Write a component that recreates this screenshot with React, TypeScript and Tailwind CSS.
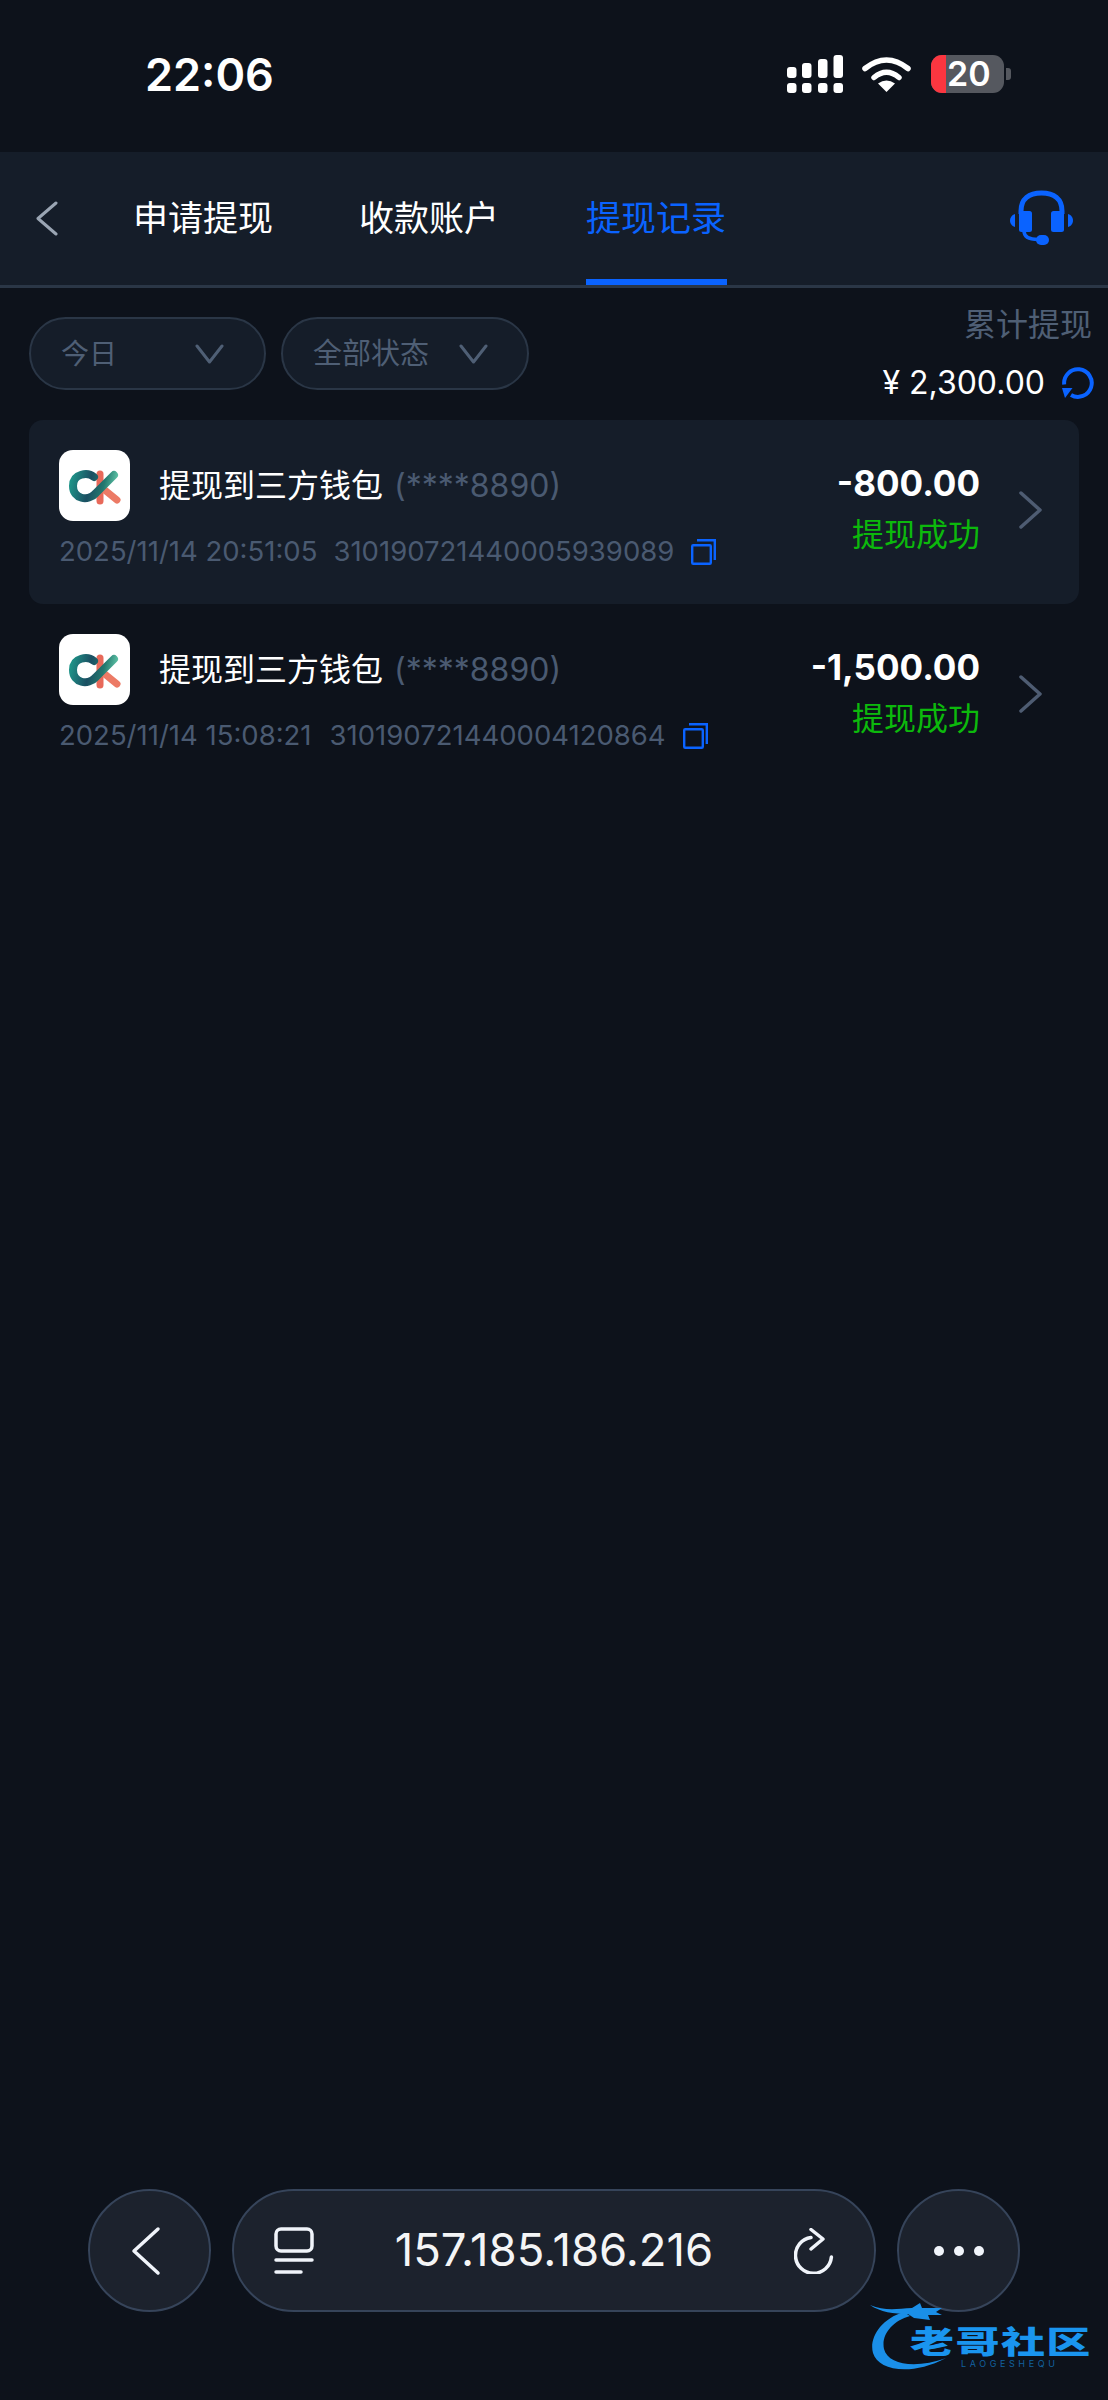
const FONT = "font-['Inter','Noto_Sans_CJK_SC',sans-serif]";

const RECORDS = [
  { time: '2025/11/14 20:51:05', id: '310190721440005939089', amount: '-800.00', active: true, idGap: 'ml-[16px]' },
  { time: '2025/11/14 15:08:21', id: '310190721440004120864', amount: '-1,500.00', active: false, idGap: 'ml-[18px]' },
];

function SignalIcon() {
  return (
    <svg width="56" height="38" viewBox="0 0 56 38" fill="#fff">
      <rect x="0" y="12" width="9.5" height="11" rx="3" />
      <rect x="15" y="8" width="9.5" height="15" rx="3" />
      <rect x="31" y="4" width="9.5" height="19" rx="3" />
      <rect x="46.5" y="0" width="9.5" height="23" rx="3" />
      <rect x="0" y="28" width="9.5" height="10" rx="3" />
      <rect x="15" y="28" width="9.5" height="10" rx="3" />
      <rect x="31" y="28" width="9.5" height="10" rx="3" />
      <rect x="46.5" y="28" width="9.5" height="10" rx="3" />
    </svg>
  );
}

function WifiIcon() {
  return (
    <svg width="49" height="36" viewBox="0 0 49 36" fill="none" stroke="#fff" strokeWidth="5.5" strokeLinecap="round">
      <path d="M3 12.5 Q24.5 -4.5 46 12.5" />
      <path d="M12 21.5 Q24.5 11 37 21.5" />
      <path d="M24.5 36 L16 27.5 Q24.5 21.5 33 27.5 Z" fill="#fff" stroke="none" />
    </svg>
  );
}

function Battery() {
  return (
    <div className="flex items-center gap-[2px]">
      <div className="flex h-[38px] w-[73px] rounded-[11px] bg-[#55585f]">
        <div className="h-full w-[15px] rounded-l-[11px] bg-[#fb3640]" />
        <span className="ml-[1px] text-[34px] leading-[38px] font-semibold text-white">20</span>
      </div>
      <div className="h-[12px] w-[5px] rounded-r-[3px] bg-[#55585f]" />
    </div>
  );
}

function HeadsetIcon() {
  return (
    <svg width="63" height="55" viewBox="0 0 63 55" fill="#0a63ff">
      <path d="M11 24 V21 C11 9 19 3 31.5 3 C44 3 52 9 52 21 V24" fill="none" stroke="#0a63ff" strokeWidth="5" />
      <rect x="9" y="21" width="13" height="21" rx="2.5" />
      <rect x="41" y="21" width="13" height="21" rx="2.5" />
      <path d="M5 24 V37 C1.5 36 0 33 0 30.5 C0 28 1.5 25 5 24 Z" />
      <path d="M58 24 V37 C61.5 36 63 33 63 30.5 C63 28 61.5 25 58 24 Z" />
      <path d="M14 41 C14 47 19 49.5 28 49.5" fill="none" stroke="#0a63ff" strokeWidth="3.5" />
      <rect x="26" y="45" width="13" height="10" rx="5" />
    </svg>
  );
}

function CkLogo() {
  return (
    <div className="h-[71px] w-[71px] shrink-0 rounded-[14px] bg-white">
      <svg width="71" height="71" viewBox="0 0 71 71" fill="none" strokeLinecap="round">
        <defs>
          <linearGradient id="ck-teal" x1="12" y1="20" x2="58" y2="30" gradientUnits="userSpaceOnUse">
            <stop offset="0" stopColor="#1f9a8c" />
            <stop offset="0.45" stopColor="#1b4f62" />
            <stop offset="0.75" stopColor="#23796f" />
            <stop offset="1" stopColor="#5cc0a4" />
          </linearGradient>
        </defs>
        <path d="M41 24 V51" stroke="#e8695a" strokeWidth="7" />
        <path d="M42 37 L58 50" stroke="#ec7a65" strokeWidth="7" />
        <path d="M35 27 C29 22 14 23 14 36 C14 49 29 52 37 43 L55 25" stroke="url(#ck-teal)" strokeWidth="8" />
      </svg>
    </div>
  );
}

function CopyIcon() {
  return (
    <svg width="25" height="26" viewBox="0 0 25 26" fill="none" stroke="#0a63ff" strokeWidth="2.4">
      <rect x="1.2" y="6.2" width="18.6" height="18.6" rx="1" />
      <path d="M6 1.2 H23.8 V21" />
    </svg>
  );
}

function DownChevron() {
  return (
    <svg width="29" height="20" viewBox="0 0 29 20" fill="none" stroke="#4f5f75" strokeWidth="3" strokeLinecap="round" strokeLinejoin="round">
      <path d="M2 2 L14.5 18 L27 2" />
    </svg>
  );
}

function RecordRow({ time, id, amount, active, idGap }: (typeof RECORDS)[number]) {
  return (
    <div className={`flex h-[184px] justify-between rounded-[14px] pr-[37px] pl-[30px] ${active ? 'bg-[#151d29]' : ''}`}>
      <div className="pt-[30px]">
        <div className="flex h-[71px] items-center">
          <CkLogo />
          <span className="ml-[29px] text-[32px] text-white">提现到三方钱包</span>
          <span className="ml-[11px] text-[32px] text-[#4a5a71]">(****8890)</span>
        </div>
        <div className="mt-[15px] flex h-[32px] items-center text-[27.5px] text-[#4a5a71]">
          <span>{time}</span>
          <span className={idGap}>{id}</span>
          <span className="ml-[17px]">
            <CopyIcon />
          </span>
        </div>
      </div>
      <div className="flex items-start">
        <div className="flex flex-col items-end pt-[40px]">
          <span className="h-[46px] text-[35px] leading-[46px] font-bold text-white">{amount}</span>
          <span className="mt-[6px] h-[46px] text-[32px] leading-[46px] text-[#0cb90c]">提现成功</span>
        </div>
        <svg className="mt-[71px] ml-[39px]" width="23" height="38" viewBox="0 0 23 38" fill="none" stroke="#4e5c72" strokeWidth="3.5" strokeLinecap="round" strokeLinejoin="round">
          <path d="M2 2 L21 19 L2 36" />
        </svg>
      </div>
    </div>
  );
}

function Watermark() {
  return (
    <div className="absolute top-[2303px] left-[870px] h-[70px] w-[222px]">
      <svg className="absolute top-0 left-0" width="90" height="70" viewBox="0 0 90 70" fill="#1a8fe8">
        <path d="M34 9 C10 16 -1 36 3 50 C8 67 40 74 76 55 C46 66 18 62 14 46 C11 32 22 18 40 13 Z" />
        <path d="M0 2 C14 8 26 6 42 5 L50 0 L52 5 L72 5 L66 9 L72 12 L58 12 L60 17 L44 15 L38 11 C24 11 10 9 0 2 Z" />
      </svg>
      <span className="absolute top-[19px] left-[40px] origin-left scale-x-[1.42] text-[31px] leading-[40px] font-black tracking-[1px] text-[#1a95ef]">
        老哥社区
      </span>
      <span className="absolute top-[55px] left-[91px] text-[9px] leading-[11px] tracking-[3.6px] text-[#12619f]">LAOGESHEQU</span>
    </div>
  );
}

export default function App() {
  return (
    <div className={`relative flex h-[2400px] w-[1108px] flex-col overflow-hidden bg-[#0d121b] ${FONT}`}>
      {/* status bar */}
      <div className="flex h-[152px] shrink-0 items-start justify-between pt-[55px] pr-[97px] pl-[145px]">
        <span className="text-[45px] leading-[40px] font-semibold text-white">22:06</span>
        <div className="flex items-center">
          <SignalIcon />
          <div className="mr-[20px] ml-[19px]">
            <WifiIcon />
          </div>
          <Battery />
        </div>
      </div>

      {/* tabs */}
      <div className="flex h-[136px] shrink-0 items-start border-b-[3px] border-[#2a3646] bg-[#151d29] pr-[35px] pl-[35px]">
        <svg className="mt-[49px]" width="23" height="35" viewBox="0 0 23 35" fill="none" stroke="#9aa5b3" strokeWidth="3" strokeLinecap="round" strokeLinejoin="round">
          <path d="M21 2 L3 17.5 L21 33" />
        </svg>
        <div className="ml-[75px] flex h-full gap-[86px] text-[35px] text-white">
          <span className="pt-[42px] leading-[48px]">申请提现</span>
          <span className="pt-[42px] leading-[48px]">收款账户</span>
          <span className="ml-[1px] h-full w-[141px] border-b-[6px] border-[#0a63ff] pt-[42px] leading-[48px] whitespace-nowrap text-[#0a63ff]">提现记录</span>
        </div>
        <div className="mt-[38px] ml-auto">
          <HeadsetIcon />
        </div>
      </div>

      {/* filters */}
      <div className="flex h-[132px] shrink-0 items-start justify-between pr-[14px] pl-[29px]">
        <div className="flex gap-[15px] pt-[29px]">
          <div className="flex h-[73px] w-[237px] items-center justify-between rounded-full border-2 border-[#2a3646] bg-[#151d29] pr-[40px] pl-[30px] text-[28px] text-[#4f5f75]">
            <span>今日</span>
            <DownChevron />
          </div>
          <div className="flex h-[73px] w-[248px] items-center justify-between rounded-full border-2 border-[#2a3646] bg-[#151d29] pr-[39px] pl-[30px] text-[29px] text-[#4f5f75]">
            <span>全部状态</span>
            <DownChevron />
          </div>
        </div>
        <div className="flex flex-col items-end pt-[17px]">
          <span className="mr-[2px] text-[32px] leading-[40px] text-[#4f5f75]">累计提现</span>
          <div className="mt-[22px] flex h-[32px] items-center">
            <span className="text-[32px] text-white">¥ 2,300.00</span>
            <svg className="ml-[17px]" width="32" height="32" viewBox="0 0 32 32" fill="none">
              <path d="M2.2 17.5 A13.8 13.8 0 1 1 9 28" stroke="#0a63ff" strokeWidth="4" />
              <path d="M0 21 L10.5 21 L3 31 Z" fill="#0a63ff" />
            </svg>
          </div>
        </div>
      </div>

      {/* records */}
      <div className="ml-[29px] w-[1050px] self-start">
        {RECORDS.map((record) => (
          <RecordRow key={record.id} {...record} />
        ))}
      </div>

      {/* browser bar */}
      <div className="mt-auto flex gap-[21px] pb-[88px] pl-[88px]">
        <div className="flex h-[123px] w-[123px] items-center justify-center rounded-full border-2 border-[#36445a] bg-[#1c222d]">
          <svg className="mr-[8px]" width="30" height="50" viewBox="0 0 30 50" fill="none" stroke="#f0f4fa" strokeWidth="3.5" strokeLinecap="round" strokeLinejoin="round">
            <path d="M27 3 L3 25 L27 47" />
          </svg>
        </div>
        <div className="flex h-[123px] w-[644px] items-center justify-between rounded-full border-2 border-[#36445a] bg-[#1c222d] px-[40px]">
          <svg width="40" height="47" viewBox="0 0 40 47" fill="none" stroke="#f0f4fa" strokeWidth="3.5" strokeLinecap="round">
            <rect x="2" y="2" width="36" height="22" rx="5" />
            <path d="M2 33 H38" />
            <path d="M2 45 H27" />
          </svg>
          <span className="text-[45.5px] text-[#f4f5f6]">157.185.186.216</span>
          <svg width="40" height="46" viewBox="0 0 40 46" fill="none" stroke="#f0f4fa" strokeWidth="3.5" strokeLinecap="round" strokeLinejoin="round">
            <path d="M17 9.5 A18 18 0 1 0 37.4 29" />
            <path d="M17 1.5 L29 11 L17 21" />
          </svg>
        </div>
        <div className="flex h-[123px] w-[123px] items-center justify-center gap-[10px] rounded-full border-2 border-[#36445a] bg-[#1c222d]">
          <div className="h-[10px] w-[10px] rounded-full bg-[#f0f4fa]" />
          <div className="h-[10px] w-[10px] rounded-full bg-[#f0f4fa]" />
          <div className="h-[10px] w-[10px] rounded-full bg-[#f0f4fa]" />
        </div>
      </div>

      <Watermark />
    </div>
  );
}
